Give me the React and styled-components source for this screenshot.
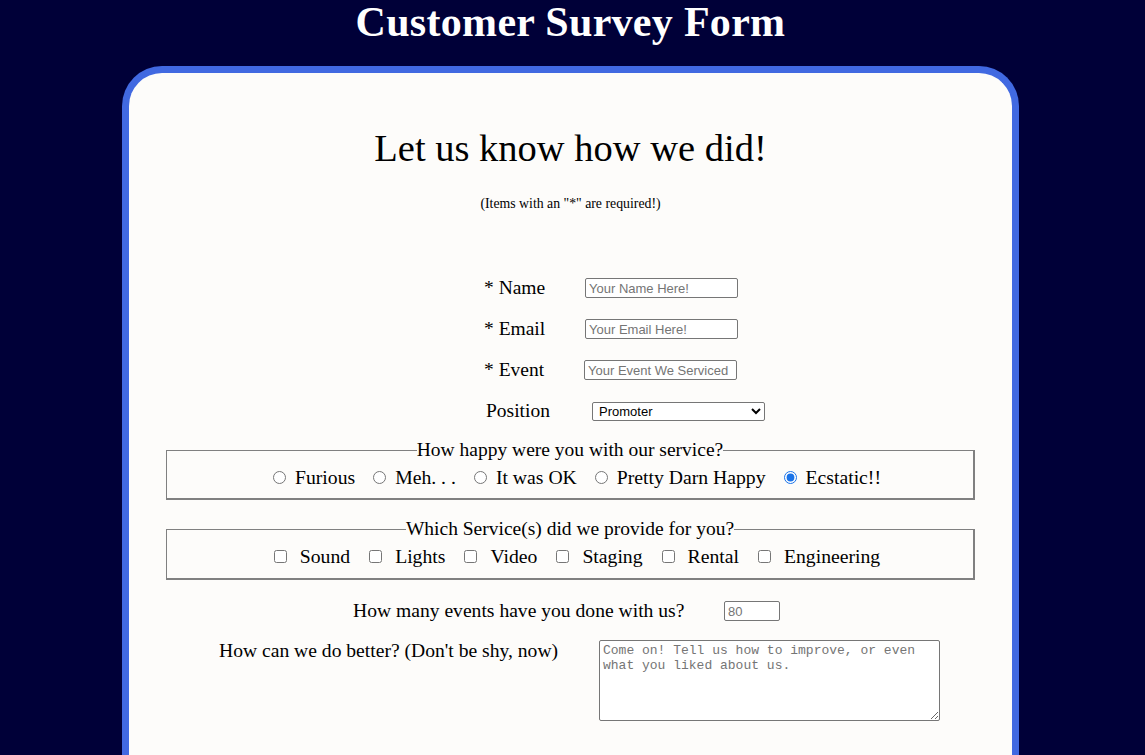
import React from 'react';
import styled, { createGlobalStyle } from 'styled-components';

const SERIF = `'Liberation Serif', 'Times New Roman', serif`;

const GlobalStyle = createGlobalStyle`
  html, body {
    margin: 0;
    padding: 0;
    background: #000038;
    font-family: ${SERIF};
    color: #000;
  }
  * { box-sizing: border-box; }
`;

const Page = styled.div`
  height: 755px;
  overflow: hidden;
  display: flex;
  flex-direction: column;
  align-items: center;
`;

const Title = styled.h1`
  margin: 0 4px 0 0;
  height: 66px;
  font-size: 42px;
  font-weight: 700;
  color: #fff;
  line-height: 44px;
  letter-spacing: 0.3px;
`;

const Card = styled.main`
  width: 897px;
  margin-right: 4px;
  flex: 1;
  background: #fdfcfa;
  border: 7px solid #4169e1;
  border-bottom: none;
  border-radius: 40px 40px 0 0;
  padding-top: 52px;
`;

const Heading = styled.h2`
  margin: 0;
  text-align: center;
  font-size: 38.5px;
  font-weight: 400;
  line-height: 46px;
`;

const Note = styled.p`
  margin: 25px 0 0;
  text-align: center;
  font-size: 13.8px;
  line-height: 16px;
`;

const Fields = styled.div`
  margin-top: 66px;
  padding-left: 355px;
  display: flex;
  flex-direction: column;
  gap: 21px;
`;

const Row = styled.div`
  display: flex;
  align-items: center;
  height: 20px;
`;

const Label = styled.label`
  width: ${({ $w }) => $w || 101}px;
  margin-left: ${({ $ml }) => $ml || 0}px;
  font-size: 19.5px;
  line-height: 20px;
`;

const TextInput = styled.input`
  width: ${({ $w }) => $w || 153}px;
  height: 20px;
  margin-left: ${({ $ml }) => $ml || 0}px;
  border: 1px solid #767676;
  border-radius: 2px;
  padding: 1px 3px;
  font-family: 'Liberation Sans', Arial, sans-serif;
  font-size: 13px;
  background: #fff;
  &::placeholder { color: #757575; }
`;

const Select = styled.select`
  width: 173px;
  height: 19px;
  border: 1px solid #767676;
  border-radius: 2px;
  font-family: 'Liberation Sans', Arial, sans-serif;
  font-size: 13px;
  background: #fff;
  padding: 0 2px;
`;

const FieldSet = styled.fieldset`
  margin: ${({ $mt }) => $mt}px 37px 0;
  border-color: #808080;
  border-width: 1px 2px 2px 1px;
  border-style: solid;
  padding: 6px 10px ${({ $pb }) => $pb}px;
`;

const Legend = styled.legend`
  margin: 0 auto;
  padding: 0;
  font-size: 19.5px;
  line-height: 20px;
`;

const Options = styled.div`
  display: flex;
  justify-content: center;
  padding-left: 14px;
  gap: ${({ $gap }) => $gap}px;
`;

const Option = styled.label`
  display: flex;
  align-items: center;
  font-size: 19.7px;
  line-height: 22px;
  gap: ${({ $gap }) => $gap}px;
  input { margin: 0; width: 13px; height: 13px; accent-color: #1a73e8; }
`;

const WideRow = styled.div`
  display: flex;
  align-items: ${({ $top }) => ($top ? 'flex-start' : 'center')};
  margin-top: ${({ $mt }) => $mt}px;
  padding-left: ${({ $pl }) => $pl}px;
`;

const WideLabel = styled.label`
  width: ${({ $w }) => $w}px;
  font-size: 19.6px;
  line-height: 22px;
`;

const TextArea = styled.textarea`
  width: 341px;
  height: 81px;
  border: 1px solid #767676;
  border-radius: 2px;
  padding: 2px 3px;
  font-family: 'Liberation Mono', 'Courier New', monospace;
  font-size: 13px;
  line-height: 15px;
  background: #fff;
  resize: both;
  &::placeholder { color: #757575; }
`;

const moods = ['Furious', 'Meh. . .', 'It was OK', 'Pretty Darn Happy', 'Ecstatic!!'];
const services = ['Sound', 'Lights', 'Video', 'Staging', 'Rental', 'Engineering'];

export default function App() {
  return (
    <Page>
      <GlobalStyle />
      <Title>Customer Survey Form</Title>
      <Card>
        <Heading>Let us know how we did!</Heading>
        <Note>(Items with an "*" are required!)</Note>

        <Fields>
          <Row>
            <Label>* Name</Label>
            <TextInput placeholder="Your Name Here!" />
          </Row>
          <Row>
            <Label>* Email</Label>
            <TextInput type="email" placeholder="Your Email Here!" />
          </Row>
          <Row>
            <Label>* Event</Label>
            <TextInput $ml={-1} placeholder="Your Event We Serviced" />
          </Row>
          <Row>
            <Label $ml={2} $w={106}>Position</Label>
            <Select defaultValue="Promoter">
              <option>Promoter</option>
              <option>Artist</option>
              <option>Venue</option>
              <option>Other</option>
            </Select>
          </Row>
        </Fields>

        <FieldSet $mt={19} $pb={10}>
          <Legend>How happy were you with our service?</Legend>
          <Options $gap={18}>
            {moods.map((m, i) => (
              <Option key={m} $gap={9}>
                <input type="radio" name="mood" defaultChecked={i === moods.length - 1} />
                {m}
              </Option>
            ))}
          </Options>
        </FieldSet>

        <FieldSet $mt={19} $pb={11}>
          <Legend>Which Service(s) did we provide for you?</Legend>
          <Options $gap={19}>
            {services.map((s) => (
              <Option key={s} $gap={13}>
                <input type="checkbox" />
                {s}
              </Option>
            ))}
          </Options>
        </FieldSet>

        <WideRow $mt={20} $pl={224}>
          <WideLabel $w={371}>How many events have you done with us?</WideLabel>
          <TextInput $w={56} type="number" placeholder="80" />
        </WideRow>

        <WideRow $mt={18} $pl={90} $top>
          <WideLabel $w={380}>How can we do better? (Don't be shy, now)</WideLabel>
          <TextArea placeholder="Come on! Tell us how to improve, or even what you liked about us." />
        </WideRow>
      </Card>
    </Page>
  );
}
